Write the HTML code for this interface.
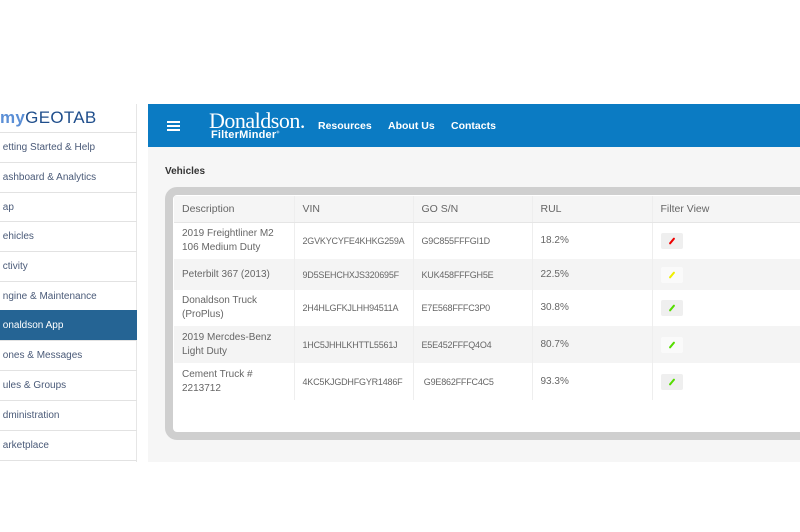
<!DOCTYPE html>
<html><head><meta charset="utf-8"><style>
*{margin:0;padding:0;box-sizing:border-box}
body{width:800px;height:532px;background:#fff;position:relative;overflow:hidden;font-family:"Liberation Sans",sans-serif}
.sb{position:absolute;left:0;top:104px;width:137px;height:358px;background:#fff;border-right:1px solid #e6e6e6}
.logo{position:absolute;left:0;top:104px;height:28px;line-height:28px;font-size:17px;color:#1f4e8c;letter-spacing:0.3px}
.logo b{color:#5b8fd6;font-weight:bold}
.it{position:absolute;left:0;width:137px;height:30px;line-height:29px;font-size:10px;color:#4a5a78;border-top:1px solid #e2e2e2;white-space:nowrap;overflow:hidden}
.it.a{background:#256494;color:#fff;border-top-color:#256494}
.main{position:absolute;left:148px;top:104px;width:652px;height:358px;background:#f6f6f6}
.hd{position:absolute;left:148px;top:104px;width:652px;height:43px;background:#0b7bc3}
.ham{position:absolute;left:167px;top:121px;width:13px;height:2px;background:#fff;box-shadow:0 4px 0 #fff,0 8px 0 #fff}
.dn{position:absolute;left:209px;top:108px;color:#fff;font-family:"Liberation Serif",serif;font-size:22px;letter-spacing:-0.5px}
.fm{position:absolute;left:211px;top:129px;color:#fff;font-weight:bold;font-size:11px;letter-spacing:0.2px}
.nav{position:absolute;top:120px;color:#fff;font-weight:bold;font-size:10.5px}
.ttl{position:absolute;left:165px;top:166px;font-size:10px;font-weight:bold;color:#333}
.card{position:absolute;left:165px;top:187px;width:660px;height:253px;border:8px solid #cfcfcf;border-radius:12px;background:#fff}
table{position:absolute;left:174px;top:196px;border-collapse:collapse;table-layout:fixed;width:640px;font-size:10px;color:#666}
td{border-right:1px solid #eee;padding:0 8px;vertical-align:middle;line-height:14px;white-space:nowrap;overflow:hidden}
td.s{font-size:9px;letter-spacing:-0.2px}
tr.h td{height:26px;background:#f5f5f5;font-size:10.5px;color:#666;border-bottom:1px solid #e5e5e5}
tr.g td{background:#f4f4f4}
.btn{display:inline-block;width:22px;height:16px;background:#efefef;border-radius:2px;position:relative;vertical-align:middle}
.btn i{position:absolute;left:10px;top:4px;width:2px;height:8px;transform:rotate(40deg);border-radius:1px}
</style></head><body>
<div class="sb"></div>
<div class="logo"><b>my</b>GEOTAB</div>
<div class="it" style="top:132px">&nbsp;etting Started &amp; Help</div>
<div class="it" style="top:162px">&nbsp;ashboard &amp; Analytics</div>
<div class="it" style="top:192px">&nbsp;ap</div>
<div class="it" style="top:221px">&nbsp;ehicles</div>
<div class="it" style="top:251px">&nbsp;ctivity</div>
<div class="it" style="top:281px">&nbsp;ngine &amp; Maintenance</div>
<div class="it a" style="top:310px">&nbsp;onaldson App</div>
<div class="it" style="top:340px">&nbsp;ones &amp; Messages</div>
<div class="it" style="top:370px">&nbsp;ules &amp; Groups</div>
<div class="it" style="top:400px">&nbsp;dministration</div>
<div class="it" style="top:430px">&nbsp;arketplace</div>
<div class="it" style="top:460px;height:1px"></div>
<div class="main"></div>
<div class="hd"></div>
<div class="ham"></div>
<div class="dn">Donaldson.</div>
<div class="fm">FilterMinder<sup style="font-size:4px">®</sup></div>
<div class="nav" style="left:318px">Resources</div>
<div class="nav" style="left:388px">About Us</div>
<div class="nav" style="left:451px">Contacts</div>
<div class="ttl">Vehicles</div>
<div class="card"></div>
<table>
<colgroup><col style="width:120px"><col style="width:119px"><col style="width:119px"><col style="width:120px"><col style="width:162px"></colgroup>
<tr class="h"><td>Description</td><td>VIN</td><td>GO S/N</td><td>RUL</td><td>Filter View</td></tr>
<tr><td style="height:37px">2019 Freightliner M2<br>106 Medium Duty</td><td class="s">2GVKYCYFE4KHKG259A</td><td class="s">G9C855FFFGI1D</td><td>18.2%</td><td><span class="btn"><i style="background:#e00"></i></span></td></tr>
<tr class="g"><td style="height:31px">Peterbilt 367 (2013)</td><td class="s">9D5SEHCHXJS320695F</td><td class="s">KUK458FFFGH5E</td><td>22.5%</td><td><span class="btn" style="background:#fafafa"><i style="background:#ee0"></i></span></td></tr>
<tr><td style="height:36px">Donaldson Truck<br>(ProPlus)</td><td class="s">2H4HLGFKJLHH94511A</td><td class="s">E7E568FFFC3P0</td><td>30.8%</td><td><span class="btn"><i style="background:#5d0"></i></span></td></tr>
<tr class="g"><td style="height:37px">2019 Mercdes-Benz<br>Light Duty</td><td class="s">1HC5JHHLKHTTL5561J</td><td class="s">E5E452FFFQ4O4</td><td>80.7%</td><td><span class="btn" style="background:#fafafa"><i style="background:#5d0"></i></span></td></tr>
<tr><td style="height:37px">Cement Truck #<br>2213712</td><td class="s">4KC5KJGDHFGYR1486F</td><td class="s">&nbsp;G9E862FFFC4C5</td><td>93.3%</td><td><span class="btn"><i style="background:#5d0"></i></span></td></tr>
</table>
</body></html>
